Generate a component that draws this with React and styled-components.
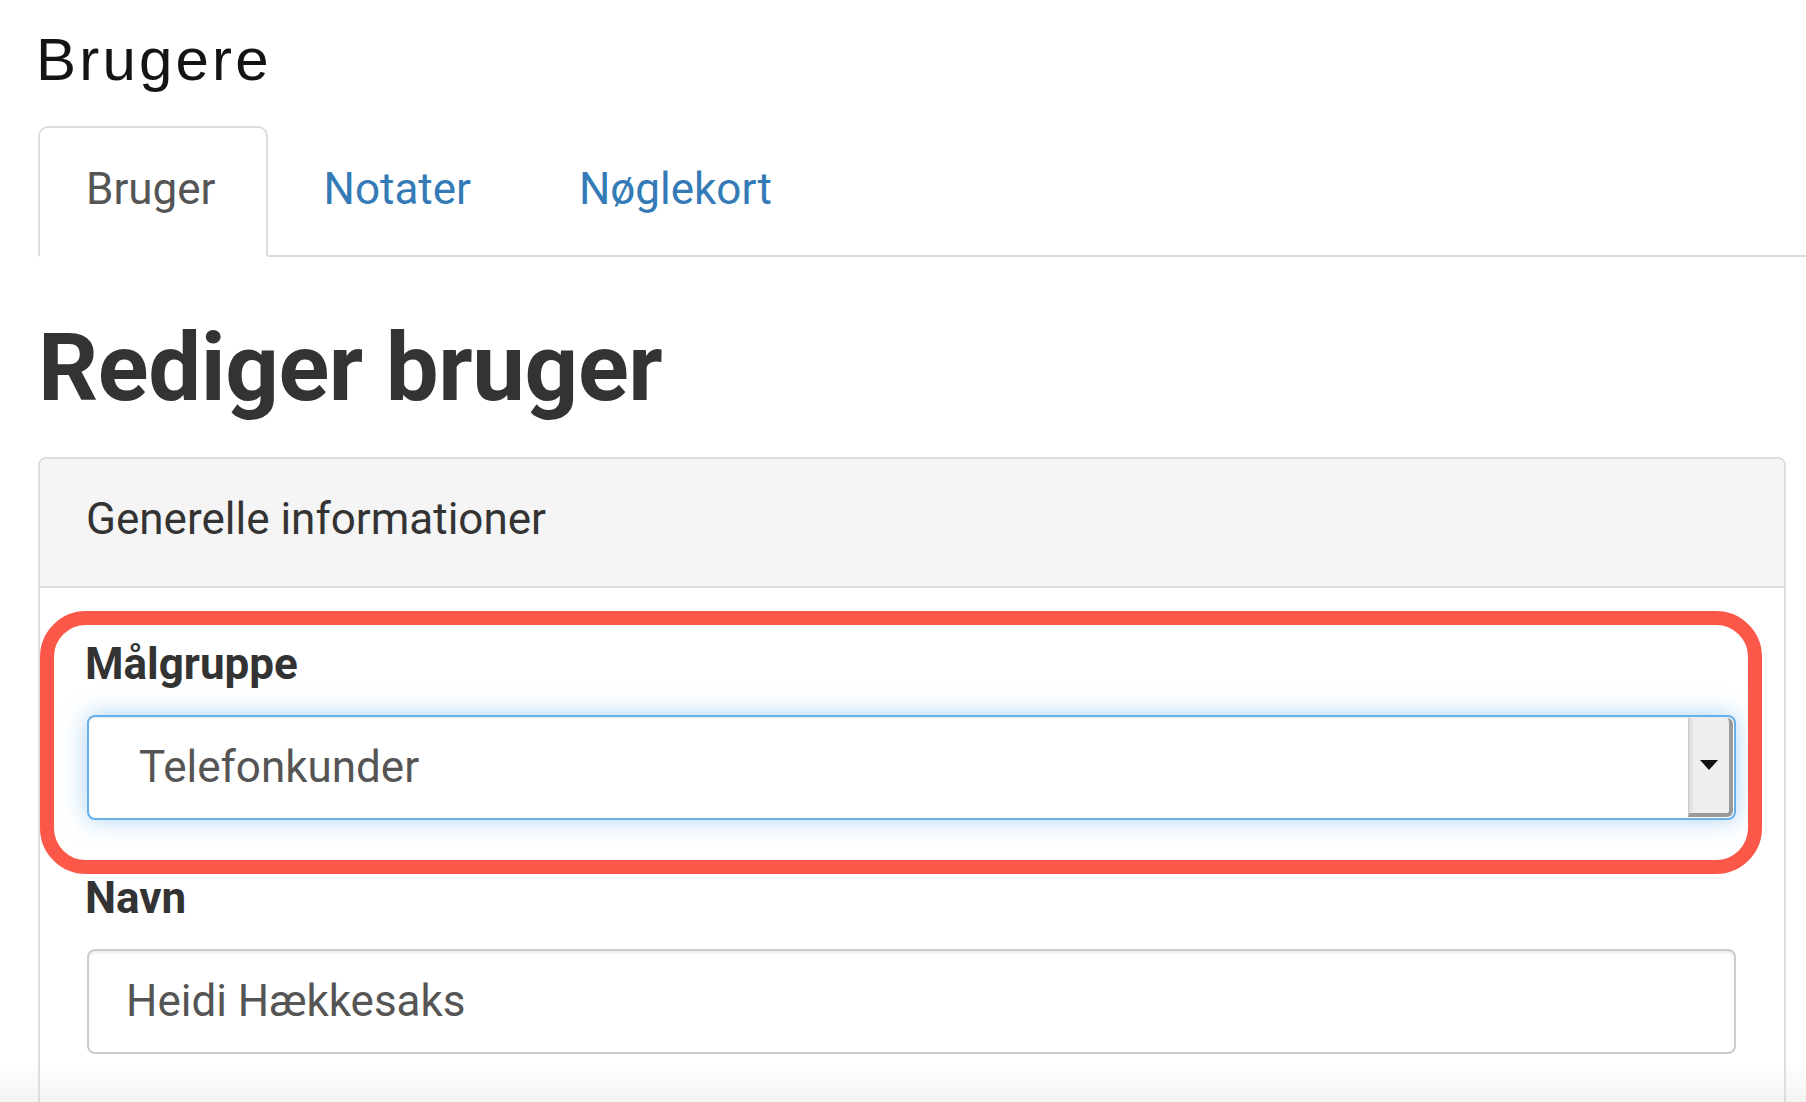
import React from "react";
import styled, { createGlobalStyle } from "styled-components";

const Global = createGlobalStyle`
  html {
    min-height: 100%;
    background: linear-gradient(to bottom, #ffffff 0, #ffffff 1062px, #f3f3f3 1102px) no-repeat;
  }
  body {
    margin: 0;
    font-family: Roboto, "Helvetica Neue", Arial, sans-serif;
    color: #333;
  }
  * { box-sizing: border-box; }
`;

const Page = styled.div`
  padding: 30px 20px 0 38px;
`;

const PageTitle = styled.div`
  font-family: "Liberation Sans", Arial, sans-serif;
  font-size: 60px;
  line-height: 60px;
  letter-spacing: 3.2px;
  color: #141414;
  margin: 0 0 36px -2px;
`;

const Nav = styled.div`
  display: flex;
  border-bottom: 2px solid #dddddd;
  margin-right: -20px;
`;

const Tab = styled.div`
  padding: 31px 50px 36px 46px;
  margin: 0 8px -2px 0;
  border: 2px solid ${(p) => (p.$active ? "#dddddd" : "transparent")};
  border-bottom-color: ${(p) => (p.$active ? "#ffffff" : "transparent")};
  border-radius: 10px 10px 0 0;
  background: ${(p) => (p.$active ? "#ffffff" : "transparent")};
  font-size: 44px;
  line-height: 60px;
  color: ${(p) => (p.$active ? "#555555" : "#337ab7")};
`;

const Heading = styled.h1`
  margin: 59px 0 35px;
  font-size: 94px;
  line-height: 105.6px;
  font-weight: 700;
  color: #333;
  letter-spacing: -0.4px;
`;

const Panel = styled.div`
  border: 2px solid #dddddd;
  border-radius: 8px;
  background: transparent;
`;

const PanelHeader = styled.div`
  padding: 30px 48px 37px 46px;
  background: #f5f5f5;
  border-bottom: 2px solid #dddddd;
  border-radius: 6px 6px 0 0;
  font-size: 44px;
  line-height: 60px;
  color: #333;
`;

const PanelBody = styled.div`
  padding: 46px 48px 40px 47px;
`;

const FormGroup = styled.div`
  position: relative;
  margin-bottom: 48px;
`;

const Highlight = styled.div`
  position: absolute;
  top: -23px;
  bottom: -54px;
  left: -47px;
  right: -26px;
  border: 14px solid #fb5849;
  border-radius: 46px;
  pointer-events: none;
`;

const Label = styled.label`
  display: block;
  font-size: 44px;
  line-height: 60px;
  font-weight: 700;
  color: #333;
  margin: 0 0 21px -2px;
`;

const SelectBox = styled.div`
  display: flex;
  align-items: center;
  height: 105px;
  padding-left: 50px;
  border: 2px solid #66afe9;
  border-radius: 8px;
  background: #fff;
  box-shadow: inset 0 1px 1px rgba(0, 0, 0, 0.075), 0 0 24px rgba(102, 175, 233, 0.55);
  font-size: 44px;
  color: #555;
`;

const SelectValue = styled.span`
  flex: 1;
`;

const DropButton = styled.div`
  align-self: stretch;
  width: 45px;
  margin: 1px 1px 1px 0;
  display: flex;
  align-items: center;
  justify-content: center;
  background: linear-gradient(to right, #dcdcdc 0, #efefef 6px, #efefef 100%);
  border-left: 1px solid #c8c8c8;
  border-right: 4px solid #9a9a9a;
  border-bottom: 4px solid #9a9a9a;
  border-radius: 0 6px 6px 0;
`;

const Input = styled.input`
  display: block;
  width: 100%;
  height: 105px;
  padding: 0 37px;
  border: 2px solid #cccccc;
  border-radius: 8px;
  background: #fff;
  box-shadow: inset 0 2px 2px rgba(0, 0, 0, 0.075);
  font-family: Roboto, "Helvetica Neue", Arial, sans-serif;
  font-size: 44px;
  color: #555;
  outline: none;
`;

export default function App() {
  return (
    <>
      <Global />
      <Page>
        <PageTitle>Brugere</PageTitle>
        <Nav>
          <Tab $active>Bruger</Tab>
          <Tab>Notater</Tab>
          <Tab>Nøglekort</Tab>
        </Nav>
        <Heading>Rediger bruger</Heading>
        <Panel>
          <PanelHeader>Generelle informationer</PanelHeader>
          <PanelBody>
            <FormGroup>
              <Label>Målgruppe</Label>
              <SelectBox>
                <SelectValue>Telefonkunder</SelectValue>
                <DropButton>
                  <svg width="20" height="10" viewBox="0 0 20 10">
                    <path d="M1 0 L19 0 L10 10 Z" fill="#111" />
                  </svg>
                </DropButton>
              </SelectBox>
              <Highlight />
            </FormGroup>
            <FormGroup>
              <Label>Navn</Label>
              <Input defaultValue="Heidi Hækkesaks" readOnly />
            </FormGroup>
          </PanelBody>
        </Panel>
      </Page>
    </>
  );
}
